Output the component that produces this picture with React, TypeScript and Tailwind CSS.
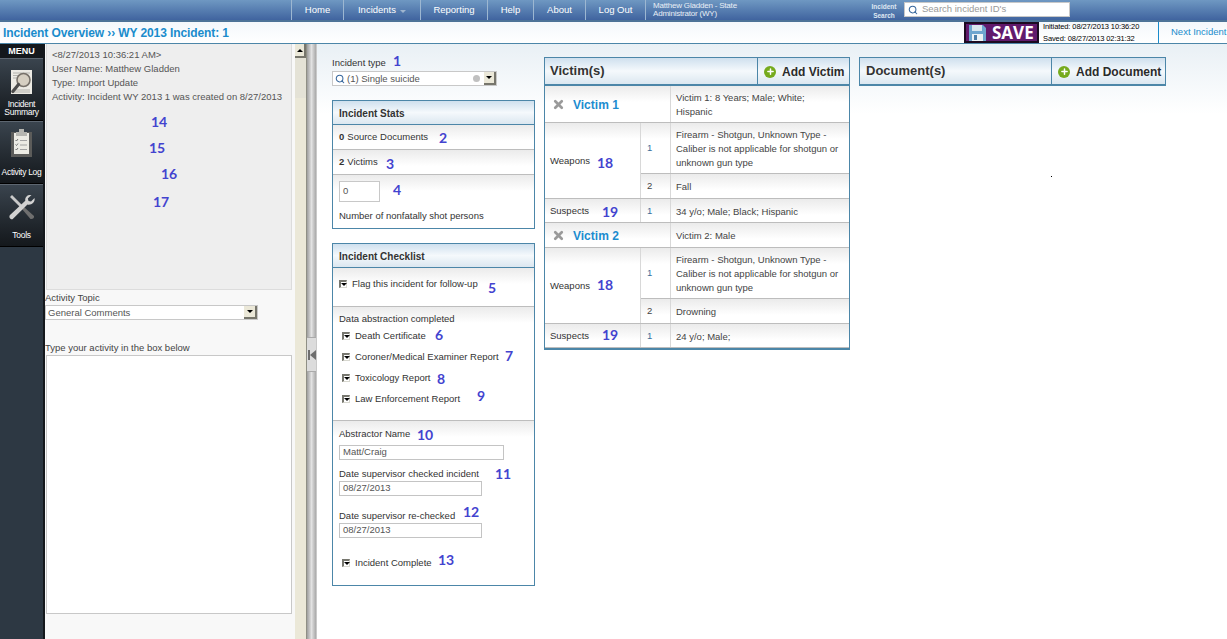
import React from 'react';
import { Search, Plus, X } from 'lucide-react';

const navItems = [
  { label: 'Home', w: 'w-[52px]' },
  { label: 'Incidents', w: 'w-[77px]', caret: true },
  { label: 'Reporting', w: 'w-[67px]' },
  { label: 'Help', w: 'w-[46px]' },
  { label: 'About', w: 'w-[52px]' },
  { label: 'Log Out', w: 'w-[60px]' },
];

// the blue numbers pencilled over the screenshot
const notes = [
  { n: 1, x: 393, y: 53 }, { n: 2, x: 439, y: 130 }, { n: 3, x: 386, y: 156 }, { n: 4, x: 393, y: 182 },
  { n: 5, x: 488, y: 280 }, { n: 6, x: 435, y: 327 }, { n: 7, x: 505, y: 348 }, { n: 8, x: 437, y: 371 },
  { n: 9, x: 477, y: 388 }, { n: 10, x: 417, y: 427 }, { n: 11, x: 495, y: 466 }, { n: 12, x: 463, y: 504 },
  { n: 13, x: 438, y: 552 }, { n: 14, x: 151, y: 114 }, { n: 15, x: 149, y: 140 }, { n: 16, x: 161, y: 166 },
  { n: 17, x: 153, y: 194 }, { n: 18, x: 597, y: 155 }, { n: 19, x: 602, y: 204 }, { n: 18, x: 597, y: 277 },
  { n: 19, x: 602, y: 327 },
];

const Note = ({ n, x, y }: { n: number; x: number; y: number }) => (
  <span
    className="absolute font-['Lato',sans-serif] text-[14px] leading-[16px] font-bold text-[#4343cf]"
    style={{ left: x, top: y }}
  >
    {n}
  </span>
);

const Check = () => (
  <span className="flex w-[8px] h-[8px] shrink-0 items-center justify-center border-t-2 border-l-2 border-r border-b border-t-[#77776f] border-l-[#77776f] border-r-[#d8d8d0] border-b-[#d8d8d0] bg-white">
    <span className="w-0 h-0 border-x-[3px] border-x-transparent border-t-[3px] border-t-black" />
  </span>
);

const DropBtn = ({ className = '' }: { className?: string }) => (
  <span className={`flex items-center justify-center bg-[#ebe8d8] border-r-2 border-b-2 border-[#77766c] ${className}`}>
    <span className="w-0 h-0 border-x-[3px] border-x-transparent border-t-[3px] border-t-black" />
  </span>
);

const PanelHead = ({ title }: { title: string }) => (
  <div className="h-[24px] px-[6px] pt-[1px] flex items-center bg-gradient-to-b from-[#cfe0ee] via-[#f5f9fc] to-[#dbe7f0] border-b border-[#4c86a8] font-bold text-[#333] text-[10px]">
    {title}
  </div>
);

const AddHead = ({ title, add, split }: { title: string; add: string; split: string }) => (
  <div className="h-[29px] flex bg-gradient-to-b from-[#cfe0ee] via-[#f5f9fc] to-[#dbe7f0] border border-[#4c86a8] border-b-2">
    <div className={`${split} pt-[5px] text-[13px] leading-[16px] font-bold text-[#333] border-r border-[#4c86a8]`}>{title}</div>
    <div className="flex-1 flex items-center pl-[6px] gap-[6px] pt-[1px] text-[12px] font-bold text-[#2b2b2b] whitespace-nowrap">
      <span className="w-[12px] h-[12px] rounded-full bg-[#76ab1e] flex items-center justify-center">
        <Plus size={9} strokeWidth={4} className="text-white" />
      </span>
      {add}
    </div>
  </div>
);

const RowGrad = 'bg-white bg-gradient-to-b from-[#ebebeb] to-white bg-[length:100%_16px] bg-no-repeat';

const VictimHead = ({ name, info, h }: { name: string; info: string; h: string }) => (
  <div className={`flex ${h} border-b border-[#bdbdbd] ${RowGrad}`}>
    <div className="w-[126px] flex items-center pl-[7px] pt-[1px] gap-[8px] border-r border-[#d8d8d8]">
      <X size={13} strokeWidth={5} className="text-[#9a9a9a]" />
      <span className="text-[#1c8ccf] font-bold text-[12px]">{name}</span>
    </div>
    <div className="flex-1 flex items-center pl-[5px] pr-[8px] pt-[1px] text-[9.5px] leading-[14px] text-[#444]">{info}</div>
  </div>
);

const SubRow = ({ num, text, h, last, dark }: { num: string; text: string; h: string; last?: boolean; dark?: boolean }) => (
  <div className={`flex ${h} ${last ? '' : 'border-b border-[#bdbdbd]'} ${RowGrad}`}>
    <div className={`w-[30px] pl-[6px] pt-[1px] flex items-center border-r border-[#d8d8d8] text-[9.5px] ${dark ? 'text-[#444]' : 'text-[#3a6f9a]'}`}>{num}</div>
    <div className="flex-1 flex items-center pl-[5px] pr-[8px] pt-[2px] text-[9.5px] leading-[14px] text-[#444]">{text}</div>
  </div>
);

const firearm = 'Firearm - Shotgun, Unknown Type - Caliber is not applicable for shotgun or unknown gun type';

const VictimBlock = ({ name, info, headH, second, suspect }: { name: string; info: string; headH: string; second: string; suspect: string }) => (
  <>
    <VictimHead name={name} info={info} h={headH} />
    <div className="flex border-b border-[#bdbdbd]">
      <div className={`w-[96px] flex items-center pl-[5px] pt-[2px] text-[9.5px] text-[#333] border-r border-[#d8d8d8] ${RowGrad}`}>Weapons</div>
      <div className="flex-1">
        <SubRow num="1" text={firearm} h="h-[51px]" />
        <SubRow num="2" text={second} h="h-[24px]" last dark />
      </div>
    </div>
    <div className={`flex h-[24px] border-b border-[#bdbdbd] ${RowGrad}`}>
      <div className="w-[96px] flex items-center pl-[5px] pt-[2px] text-[9.5px] text-[#333] border-r border-[#d8d8d8]">Suspects</div>
      <div className="flex-1">
        <SubRow num="1" text={suspect} h="h-[23px]" last />
      </div>
    </div>
  </>
);

const Field = ({ label, value, w, mb }: { label: string; value: string; w: string; mb: string }) => (
  <div className={mb}>
    <div className="text-[9.5px] leading-[12px] text-[#333] mb-[1px]">{label}</div>
    <div className={`${w} h-[15px] border border-[#c4c4c4] bg-white flex items-center pl-[3px] text-[9.5px] text-[#555]`}>{value}</div>
  </div>
);

const CheckRow = ({ label, mb }: { label: string; mb: string }) => (
  <div className={`flex items-center gap-[5px] pl-[3px] text-[9.5px] leading-[12px] text-[#333] ${mb}`}>
    <Check />
    <span>{label}</span>
  </div>
);

const ReportIcon = () => (
  <svg width="21" height="24" viewBox="0 0 21 24">
    <rect x="0" y="0" width="21" height="24" fill="#eceae4" />
    <path d="M2 3h17M2 5.500h8M2 8h4M2 20h17M2 22h17" stroke="#a5a5a0" strokeWidth="0.8" />
    <circle cx="12.500" cy="10" r="6.500" fill="#d6cfc2" stroke="#77716a" strokeWidth="1.600" />
    <path d="M7.500 14.500L1.800 21.500" stroke="#4c4c4c" strokeWidth="3.200" strokeLinecap="round" />
  </svg>
);

const ClipboardIcon = () => (
  <svg width="21" height="28" viewBox="0 0 21 28">
    <rect x="0" y="3" width="21" height="25" fill="#5c5c5a" />
    <rect x="3" y="4" width="15" height="21" fill="#ecebe4" />
    <path d="M8 0h5v3h3v4H5V3h3z" fill="#b5b5b0" />
    <path d="M4.500 11l1 1 1.500-2M4.500 15.500l1 1 1.500-2M4.500 20l1 1 1.500-2" stroke="#555" strokeWidth="0.8" fill="none" />
    <path d="M9 11.500h7M9 16h7M9 20.500h7" stroke="#9a9a9a" strokeWidth="0.9" />
  </svg>
);

const ToolsIcon = () => (
  <svg width="26" height="25" viewBox="0 0 26 25">
    <path d="M1 2l2-2 11 11-2 2z" fill="#c9c9c9" />
    <path d="M13 14l2-2 10 9c.5 2-1.500 3.500-3.500 3z" fill="#6f6f6f" />
    <path d="M25.500 3l-3.500 3.500-2.500-.5-.7-2.500L22.500 0c-3.500-.8-7 2-6.200 5.800L1 20c-1.500 2 0 4.500 2.500 4.300L18.500 9.500c4 1 8-2.500 7-6.500z" fill="#d2d2d2" />
  </svg>
);

const FloppyIcon = () => (
  <svg width="17" height="16" viewBox="0 0 17 16" className="shrink-0">
    <path d="M0 0h14l3 3v13H0z" fill="#6fa6cf" />
    <rect x="3" y="0" width="10" height="6" fill="#d9e6ee" />
    <rect x="3" y="9" width="11" height="7" fill="#eef3f6" />
    <rect x="5" y="10" width="3" height="5" fill="#4d7fa8" />
  </svg>
);

const RailItem = ({ icon, label, pad }: { icon: React.ReactNode; label: React.ReactNode; pad: string }) => (
  <div className={`h-[63px] ${pad} flex flex-col items-center border-t border-[#5d6670] border-b border-b-black bg-gradient-to-b from-[#3a444e] to-[#14181c] text-white text-[8.5px] leading-[8px] text-center tracking-[-0.3px]`}>
    {icon}
    {label}
  </div>
);

export default function App() {
  return (
    <div className="relative w-[1227px] h-[639px] overflow-hidden bg-white font-['Liberation_Sans',Arial,sans-serif]">
      {/* Top nav */}
      <div className="h-[20px] flex bg-gradient-to-b from-[#6f98c2] to-[#40649f] border-b-2 border-[#4d7397] box-content">
        <div className="w-[292px] border-r border-[#9db7d1]" />
        {navItems.map((item) => (
          <div
            key={item.label}
            className={`${item.w} flex items-center justify-center gap-[4px] border-r border-[#9db7d1] text-white text-[9.5px]`}
          >
            {item.label}
            {item.caret && <span className="w-0 h-0 mt-[2px] border-x-[3px] border-x-transparent border-t-[3px] border-t-[#9fb5cf]" />}
          </div>
        ))}
        <div className="w-[221px] pl-[7px] pt-[2px] text-[#e8eef5] text-[8px] leading-[8px] tracking-[-0.2px]">
          Matthew Gladden - State
          <br />
          Administrator (WY)
        </div>
        <div className="w-[34px] pt-[2px] text-[#dfe8f2] text-[6.5px] leading-[9px] font-bold text-center">
          Incident
          <br />
          Search
        </div>
        <div className="w-[166px] h-[15px] mt-[2px] ml-[3px] bg-white border border-[#c8c8c8] flex items-center pl-[3px] gap-[4px] text-[9.5px] text-[#999]">
          <Search size={10} strokeWidth={2.5} className="text-[#36669c]" />
          Search incident ID's
        </div>
      </div>

      {/* Title bar */}
      <div className="h-[21px] flex items-center bg-gradient-to-b from-[#f4f8fb] to-white border-b border-[#4c86a8] box-content">
        <div className="w-[964px] pl-[3px] text-[#1a8ccc] text-[12px] font-bold tracking-[-0.1px] whitespace-nowrap">Incident Overview ›› WY 2013 Incident: 1</div>
        <div className="w-[75px] h-[21px] flex items-center pl-[3px] gap-[6px] bg-[#611a6c] border-2 border-[#1c0a20] text-white text-[17px] leading-none font-bold font-['Open_Sans',sans-serif] overflow-hidden">
          <FloppyIcon />
          SAVE
        </div>
        <div className="w-[119px] pl-[4px] text-[7.5px] leading-[12px] text-black whitespace-nowrap tracking-[-0.1px]">
          Initiated: 08/27/2013 10:36:20
          <br />
          Saved: 08/27/2013 02:31:32
        </div>
        <div className="flex-1 h-full border-l border-[#1a8ccc] pl-[12px] flex items-center text-[#1a8ccc] text-[9.5px] whitespace-nowrap">Next Incident</div>
      </div>

      <div className="flex h-[595px]">
        {/* Menu rail */}
        <div className="w-[45px] bg-[#2d3843] border-r-2 border-[#14181c]">
          <div className="h-[14px] bg-[#14181c] text-white text-[9px] font-bold text-center leading-[14px]">MENU</div>
          <RailItem pad="pt-[11px]" icon={<ReportIcon />} label={<span className="mt-[6px]">Incident<br />Summary</span>} />
          <RailItem pad="pt-[7px]" icon={<ClipboardIcon />} label={<span className="mt-[11px]">Activity Log</span>} />
          <RailItem pad="pt-[10px]" icon={<ToolsIcon />} label={<span className="mt-[11px]">Tools</span>} />
        </div>

        {/* Activity panel */}
        <div className="w-[250px] bg-[#f8f8f8]">
          <div className="ml-[1px] w-[246px] h-[246px] bg-[#eeeeee] border border-t-0 border-[#dcdcdc] pl-[5px] pt-[4px] text-[9.5px] leading-[14px] text-[#555]">
            <div>&lt;8/27/2013 10:36:21 AM&gt;</div>
            <div>User Name: Matthew Gladden</div>
            <div>Type: Import Update</div>
            <div className="whitespace-nowrap">Activity: Incident WY 2013 1 was created on 8/27/2013</div>
          </div>
          <div className="mt-[2px] text-[9.5px] leading-[12px] text-[#444]">Activity Topic</div>
          <div className="mt-[1px] w-[213px] h-[15px] flex items-center justify-between bg-white border border-[#c8c8c8] pl-[2px] text-[9.5px] text-[#555]">
            <span className="pt-[1px]">General Comments</span>
            <DropBtn className="w-[13px] h-[13px]" />
          </div>
          <div className="mt-[22px] text-[9.5px] leading-[12px] text-[#444]">Type your activity in the box below</div>
          <div className="mt-[1px] ml-[1px] w-[246px] h-[259px] bg-white border border-[#c8c8c8]" />
        </div>

        {/* Scrollbar */}
        <div className="w-[12px] bg-[#ebe8d8] border-r border-[#8f8f85]">
          <div className="h-[14px] flex items-center justify-center bg-[#ebe8d8] border-r-2 border-b-2 border-[#77766c]">
            <span className="w-0 h-0 border-x-[3px] border-x-transparent border-b-[3px] border-b-black" />
          </div>
          <div className="h-[40px] bg-[#e4e2d6]" />
        </div>

        {/* Splitter */}
        <div className="w-[10px] flex items-start bg-gradient-to-r from-[#9e9e9e] via-[#e2e2e2] to-[#a8a8a8] border-r border-[#c9c9c9]">
          <div className="mt-[293px] w-[10px] h-[35px] bg-[#dcdcdc] border-y border-[#aaa] flex items-center pl-[1px]">
            <span className="w-[2px] h-[10px] bg-[#6e6e6e]" />
            <span className="w-0 h-0 border-y-[5px] border-y-transparent border-r-[6px] border-r-[#6e6e6e]" />
          </div>
        </div>

        {/* Main content */}
        <div className="flex-1 flex items-start pl-[15px] pt-[13px] bg-gradient-to-b from-[#e9f0f5] to-white bg-[length:100%_70px] bg-no-repeat">
          <div className="w-[203px] mr-[9px]">
            <div className="text-[9.5px] leading-[12px] text-[#333]">Incident type</div>
            <div className="mt-[2px] w-[165px] h-[15px] flex items-center bg-white border border-[#c8c8c8] pl-[2px] gap-[2px] text-[9.5px] text-[#555]">
              <Search size={10} strokeWidth={2.5} className="text-[#36669c]" />
              <span className="flex-1 pt-[1px]">(1) Single suicide</span>
              <span className="w-[7px] h-[7px] rounded-full bg-[#c0c0c0] mr-[2px]" />
              <DropBtn className="w-[12px] h-[13px]" />
            </div>
            <div className="mt-[14px] border border-[#4c86a8] h-[129px]">
              <PanelHead title="Incident Stats" />
              <div className={`h-[25px] pl-[6px] flex items-center border-b border-[#bdbdbd] text-[9.5px] text-[#333] ${RowGrad}`}>
                <b className="mr-[3px]">0</b> Source Documents
              </div>
              <div className={`h-[25px] pl-[6px] flex items-center border-b border-[#bdbdbd] text-[9.5px] text-[#333] ${RowGrad}`}>
                <b className="mr-[3px]">2</b> Victims
              </div>
              <div className={`pl-[6px] pt-[6px] text-[9.5px] text-[#333] ${RowGrad}`}>
                <div className="w-[41px] h-[21px] bg-white border border-[#c8c8c8] flex items-center pl-[3px] text-[#555]">0</div>
                <div className="mt-[8px] leading-[12px]">Number of nonfatally shot persons</div>
              </div>
            </div>
            <div className="mt-[14px] border border-[#4c86a8] h-[343px]">
              <PanelHead title="Incident Checklist" />
              <div className={`h-[39px] pl-[6px] pt-[10px] border-b border-[#bdbdbd] ${RowGrad}`}>
                <div className="flex items-center gap-[5px] text-[9.5px] leading-[12px] text-[#333]">
                  <Check />
                  Flag this incident for follow-up
                </div>
              </div>
              <div className={`h-[114px] pl-[6px] pt-[6px] border-b border-[#bdbdbd] ${RowGrad}`}>
                <div className="text-[9.5px] leading-[12px] text-[#333] mb-[5px]">Data abstraction completed</div>
                <CheckRow label="Death Certificate" mb="mb-[9px]" />
                <CheckRow label="Coroner/Medical Examiner Report" mb="mb-[9px]" />
                <CheckRow label="Toxicology Report" mb="mb-[9px]" />
                <CheckRow label="Law Enforcement Report" mb="" />
              </div>
              <div className={`pl-[6px] pt-[7px] ${RowGrad}`}>
                <div className="text-[9.5px] leading-[12px] text-[#333] mb-[5px]">Abstractor Name</div>
                <div className="w-[165px] h-[15px] border border-[#c4c4c4] bg-white flex items-center pl-[3px] text-[9.5px] text-[#555] mb-[8px]">Matt/Craig</div>
                <Field label="Date supervisor checked incident" value="08/27/2013" w="w-[143px]" mb="mb-[14px]" />
                <Field label="Date supervisor re-checked" value="08/27/2013" w="w-[143px]" mb="mb-[19px]" />
                <CheckRow label="Incident Complete" mb="" />
              </div>
            </div>
          </div>

          <div className="w-[306px] mr-[9px]">
            <AddHead title="Victim(s)" add="Add Victim" split="w-[213px] pl-[5px]" />
            <div className="border border-t-0 border-[#4c86a8] border-b-2">
              <VictimBlock name="Victim 1" info="Victim 1: 8 Years; Male; White; Hispanic" headH="h-[37px]" second="Fall" suspect="34 y/o; Male; Black; Hispanic" />
              <VictimBlock name="Victim 2" info="Victim 2: Male" headH="h-[25px]" second="Drowning" suspect="24 y/o; Male;" />
            </div>
          </div>

          <div className="w-[307px]">
            <AddHead title="Document(s)" add="Add Document" split="w-[192px] pl-[6px]" />
          </div>
        </div>
      </div>

      {notes.map((note, i) => (
        <Note key={i} {...note} />
      ))}
      <span className="absolute left-[1051px] top-[176px] w-[1px] h-[1px] bg-black" />
    </div>
  );
}
